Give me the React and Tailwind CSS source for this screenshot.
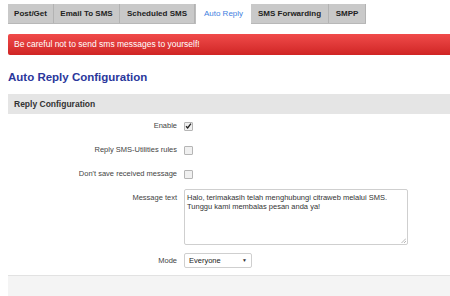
export default function App() {
  const tabs = [
    ["Post/Get", "w-[46px]"],
    ["Email To SMS", "w-[66px]"],
    ["Scheduled SMS", "w-[75px]"],
    ["Auto Reply", "w-[56px]"],
    ["SMS Forwarding", "w-[78px]"],
    ["SMPP", "w-[37px]"],
  ];
  return (
    <div className="w-[450px] h-[296px] overflow-hidden bg-white text-[#333]" style={{ fontFamily: '"Liberation Sans", Arial, sans-serif' }}>
      <div className="pl-2 pt-[4px]">
        <div className="flex h-[20px] bg-[#c9c9c9] w-max border-b border-[#b8b8b8]">
          {tabs.map(([t, w], i) => (
            <div
              key={t}
              className={`${w} whitespace-nowrap flex items-center justify-center text-[8px] ${
                i === 3 ? "bg-white text-[#3f7fe0] h-[20px] border-l border-[#bdbdbd]" : "font-bold text-[#222] border-r border-[#b3b3b3]"
              }`}
            >
              {t}
            </div>
          ))}
        </div>
      </div>
      <div className="ml-2 mt-[10px] h-[21px] bg-gradient-to-b from-[#f04a4a] to-[#d02424] rounded-l-[2px] flex items-center pl-[6px] text-white text-[8.5px] whitespace-nowrap">
        Be careful not to send sms messages to yourself!
      </div>
      <div className="ml-2 mt-[15px] h-[14px] leading-[14px] text-[11.5px] font-bold text-[#2a379c] whitespace-nowrap">
        Auto Reply Configuration
      </div>
      <div className="ml-2 mt-[10px] h-[20px] bg-[#e5e5e5] flex items-center pl-[6px] text-[8.5px] font-bold text-[#333]">
        Reply Configuration
      </div>
      <div className="ml-2 text-[7.5px] text-[#444]">
        <Row label="Enable">
          <Check checked />
        </Row>
        <Row label="Reply SMS-Utilities rules">
          <Check />
        </Row>
        <Row label="Don't save received message">
          <Check />
        </Row>
        <div className="flex mt-[3px]">
          <div className="w-[176px] text-right pr-[7px] pt-[3px] whitespace-nowrap">Message text</div>
          <div className="relative w-[224px] h-[56px] border border-[#cfcfcf] rounded-[2px] bg-white pl-[2px] pt-[3px] leading-[9px] text-[7.5px] text-[#333] whitespace-nowrap">
            Halo, terimakasih telah menghubungi citraweb melalui SMS.
            <br />
            Tunggu kami membalas pesan anda ya!
            <svg className="absolute right-[1px] bottom-[1px]" width="5" height="5" viewBox="0 0 5 5">
              <path d="M5 0.5L0.5 5M5 3L3 5" stroke="#999" strokeWidth="0.7" />
            </svg>
          </div>
        </div>
        <div className="flex items-center mt-[8px]">
          <div className="w-[176px] text-right pr-[7px]">Mode</div>
          <div className="w-[68px] h-[15px] border border-[#cfcfcf] rounded-[2px] flex items-center justify-between pl-[4px] pr-[4px] text-[7.5px] text-[#222]">
            <span>Everyone</span>
            <span className="text-[5px] text-[#333]">▼</span>
          </div>
        </div>
      </div>
      <div className="ml-2 mt-[7px] h-[30px] bg-[#f4f4f4] border-t border-[#e2e2e2]"></div>
    </div>
  );
}

function Row({ label, children }) {
  return (
    <div className="flex items-center h-[24px]">
      <div className="w-[176px] text-right pr-[7px] whitespace-nowrap">{label}</div>
      {children}
    </div>
  );
}

function Check({ checked }) {
  return (
    <div className="w-[9px] h-[9px] border border-[#b5b5b5] bg-[#f0f0f0] rounded-[1px] flex items-center justify-center">
      {checked && (
        <svg width="8" height="8" viewBox="0 0 8 8">
          <path d="M1.2 4.3L3 6.2L6.8 1.2" stroke="#222" strokeWidth="1.5" fill="none" />
        </svg>
      )}
    </div>
  );
}
